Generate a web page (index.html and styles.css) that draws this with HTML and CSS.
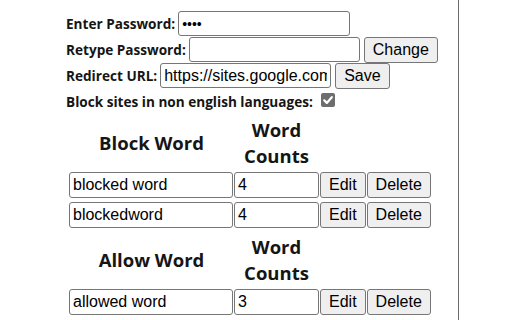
FILE: index.html
```html
<!DOCTYPE html>
<html>
<head>
<meta charset="utf-8">
<link rel="stylesheet" href="styles.css">
</head>
<body>
<div class="panel">
  <div class="settings">
    <div class="row">
      <span class="label">Enter Password:</span>
      <input class="field pw" type="password" value="abcd">
    </div>
    <div class="row">
      <span class="label">Retype Password:</span>
      <input class="field retype" type="password" value="">
      <button class="btn">Change</button>
    </div>
    <div class="row">
      <span class="label">Redirect URL:</span>
      <input class="field url" type="text" value="https://sites.google.com">
      <button class="btn">Save</button>
    </div>
    <div class="row check-row">
      <span class="label">Block sites in non english languages:</span>
      <span class="checkbox"><svg viewBox="0 0 14 14" width="14" height="14"><rect x="0" y="0" width="14" height="14" rx="2" fill="#6d6d6d"/><path d="M3.2 7.3 L5.8 9.9 L10.8 4.2" fill="none" stroke="#fff" stroke-width="2.2" stroke-linecap="round" stroke-linejoin="round"/></svg></span>
    </div>
  </div>

  <div class="words">
    <div class="head">
      <div class="h word">Block Word</div>
      <div class="h count">Word<br>Counts</div>
    </div>
    <div class="wrow">
      <input class="field word-in" type="text" value="blocked word">
      <input class="field count-in" type="text" value="4">
      <button class="btn small">Edit</button>
      <button class="btn small">Delete</button>
    </div>
    <div class="wrow">
      <input class="field word-in" type="text" value="blockedword">
      <input class="field count-in" type="text" value="4">
      <button class="btn small">Edit</button>
      <button class="btn small">Delete</button>
    </div>
  </div>

  <div class="words allow">
    <div class="head">
      <div class="h word">Allow Word</div>
      <div class="h count">Word<br>Counts</div>
    </div>
    <div class="wrow">
      <input class="field word-in" type="text" value="allowed word">
      <input class="field count-in" type="text" value="3">
      <button class="btn small">Edit</button>
      <button class="btn small">Delete</button>
    </div>
  </div>
</div>
</body>
</html>
```

FILE: styles.css
```css
html, body {
  margin: 0;
  padding: 0;
  background: #fff;
}
body {
  font-family: "Open Sans", "Noto Sans", sans-serif;
  color: #151515;
}
.panel {
  width: 459px;
  height: 320px;
  box-sizing: border-box;
  border-right: 1px solid #6a6a6a;
  padding: 11px 0 0 66px;
  overflow: hidden;
}
.settings {
  display: flex;
  flex-direction: column;
  gap: 1px;
}
.row {
  display: flex;
  align-items: center;
  height: 25px;
}
.label {
  font-weight: 700;
  font-size: 13.6px;
  margin-right: 3px;
  white-space: nowrap;
}
.field {
  font-family: "Liberation Sans", Arial, sans-serif;
  font-size: 16px;
  color: #000;
  height: 25px;
  box-sizing: border-box;
  border: 1px solid #767676;
  border-radius: 3px;
  padding: 1px 3px;
  margin: 0;
  background: #fff;
  outline: none;
}
.pw { width: 172px; font-size: 14px; letter-spacing: 0; }
.retype { width: 171px; }
.url { width: 171px; }
.btn {
  font-family: "Liberation Sans", Arial, sans-serif;
  font-size: 16px;
  color: #000;
  height: 26px;
  box-sizing: border-box;
  background: #efefef;
  border: 1px solid #767676;
  border-radius: 3px;
  padding: 1px 8px;
  margin: 0 0 0 4px;
}
.check-row {
  height: 24px;
}
.checkbox {
  display: inline-flex;
  margin-left: 5px;
  margin-top: -2px;
}
.words {
  margin-left: 3px;
  margin-top: 4px;
}
.allow {
  margin-top: 6px;
}
.head {
  display: flex;
  align-items: center;
  height: 52px;
  margin-bottom: 3px;
}
.h {
  font-weight: 700;
  font-size: 18.5px;
  line-height: 26px;
  text-align: center;
}
.h.word { width: 165px; }
.h.count { width: 85px; }
.wrow {
  display: flex;
  align-items: center;
  gap: 1px;
  height: 26px;
  margin-bottom: 4px;
}
.word-in { width: 164px; height: 26px; }
.count-in { width: 85px; height: 26px; }
.btn.small {
  margin: 0;
  height: 26px;
}
```
